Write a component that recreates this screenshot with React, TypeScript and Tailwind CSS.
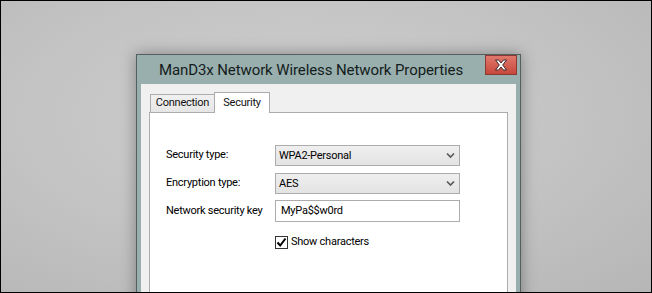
import React from 'react'

function Chevron() {
    return (
        <svg width="9" height="7" viewBox="0 0 9 7" className="shrink-0">
            <path d="M1 1.5 L4.5 5 L8 1.5" fill="none" stroke="#5a5a5a" strokeWidth="1.7" />
        </svg>
    )
}

function CloseGlyph() {
    return (
        <svg width="14" height="12" viewBox="0 0 14 12">
            <path
                d="M1.5 1 H4.5 L7 4 L9.5 1 H12.5 L8.7 6 L12.5 11 H9.5 L7 8 L4.5 11 H1.5 L5.3 6 Z"
                fill="#ffffff"
                stroke="#3d2a28"
                strokeWidth="1"
                strokeLinejoin="round"
            />
        </svg>
    )
}

function Select({ value }: { value: string }) {
    return (
        <div className="flex h-[21px] w-[185px] items-center justify-between border border-[#acacac] bg-gradient-to-b from-[#efefef] to-[#e3e3e3] pl-[3px] pr-[4px]">
            <span className="leading-none text-black">{value}</span>
            <Chevron />
        </div>
    )
}

export default function App() {
    return (
        <div className="h-[293px] w-[652px] overflow-hidden whitespace-nowrap border border-black bg-[radial-gradient(ellipse_at_45%_40%,#cecece_0%,#c3c3c3_55%,#b6b6b6_100%)] font-['Roboto',sans-serif]">
            <div className="pl-[135px] pt-[53px]">
                <div className="flex h-[260px] w-[385px] flex-col border border-[#53605f] bg-[#98afad] shadow-[0_0_14px_rgba(0,0,0,0.35)]">
                    {/* title bar */}
                    <div className="flex h-[29px] shrink-0 items-start">
                        <div className="flex h-full flex-1 items-center justify-center pt-px text-[15px] tracking-[-0.1px] text-[#141c1c]">
                            ManD3x Network Wireless Network Properties
                        </div>
                        <div className="mr-[3px] flex h-[20px] w-[32px] items-center justify-center border border-[#8a3a33] bg-gradient-to-b from-[#e0776b] to-[#c7473b]">
                            <CloseGlyph />
                        </div>
                    </div>

                    {/* client area */}
                    <div className="mx-[4px] flex flex-1 flex-col bg-[#f0f0f0] pl-[8px] pr-[8px] pt-[8px] text-[11px] tracking-[-0.25px]">
                        <div className="flex h-[20px] items-end pl-px">
                            <div className="flex h-[18px] w-[65px] items-center justify-center border border-b-0 border-[#acacac] bg-gradient-to-b from-[#f0f0f0] to-[#e6e6e6] text-[#111]">
                                Connection
                            </div>
                            <div className="relative z-10 -mb-px -ml-px flex h-[21px] w-[56px] items-start justify-center border border-b-0 border-[#acacac] bg-white pt-[2px] text-[#111]">
                                Security
                            </div>
                        </div>
                        <div className="flex-1 border border-[#acacac] bg-white pl-[16px] pt-[32px] text-black">
                            <div className="flex items-center">
                                <span className="w-[109px]">Security type:</span>
                                <Select value="WPA2-Personal" />
                            </div>
                            <div className="mt-[7px] flex items-center">
                                <span className="w-[109px]">Encryption type:</span>
                                <Select value="AES" />
                            </div>
                            <div className="mt-[6px] flex items-center">
                                <span className="w-[109px]">Network security key</span>
                                <div className="flex h-[22px] w-[185px] items-center border border-[#acacac] bg-white pl-[5px]">
                                    MyPa$$w0rd
                                </div>
                            </div>
                            <div className="mt-[12px] flex items-center pl-[109px]">
                                <div className="flex h-[13px] w-[13px] items-center justify-center border border-[#333] bg-white">
                                    <svg width="11" height="11" viewBox="0 0 11 11">
                                        <path d="M1.5 5.5 L4.2 8.5 L9.5 1.5" fill="none" stroke="#000" strokeWidth="2" />
                                    </svg>
                                </div>
                                <span className="ml-[3px]">Show characters</span>
                            </div>
                        </div>
                    </div>
                </div>
            </div>
        </div>
    )
}
